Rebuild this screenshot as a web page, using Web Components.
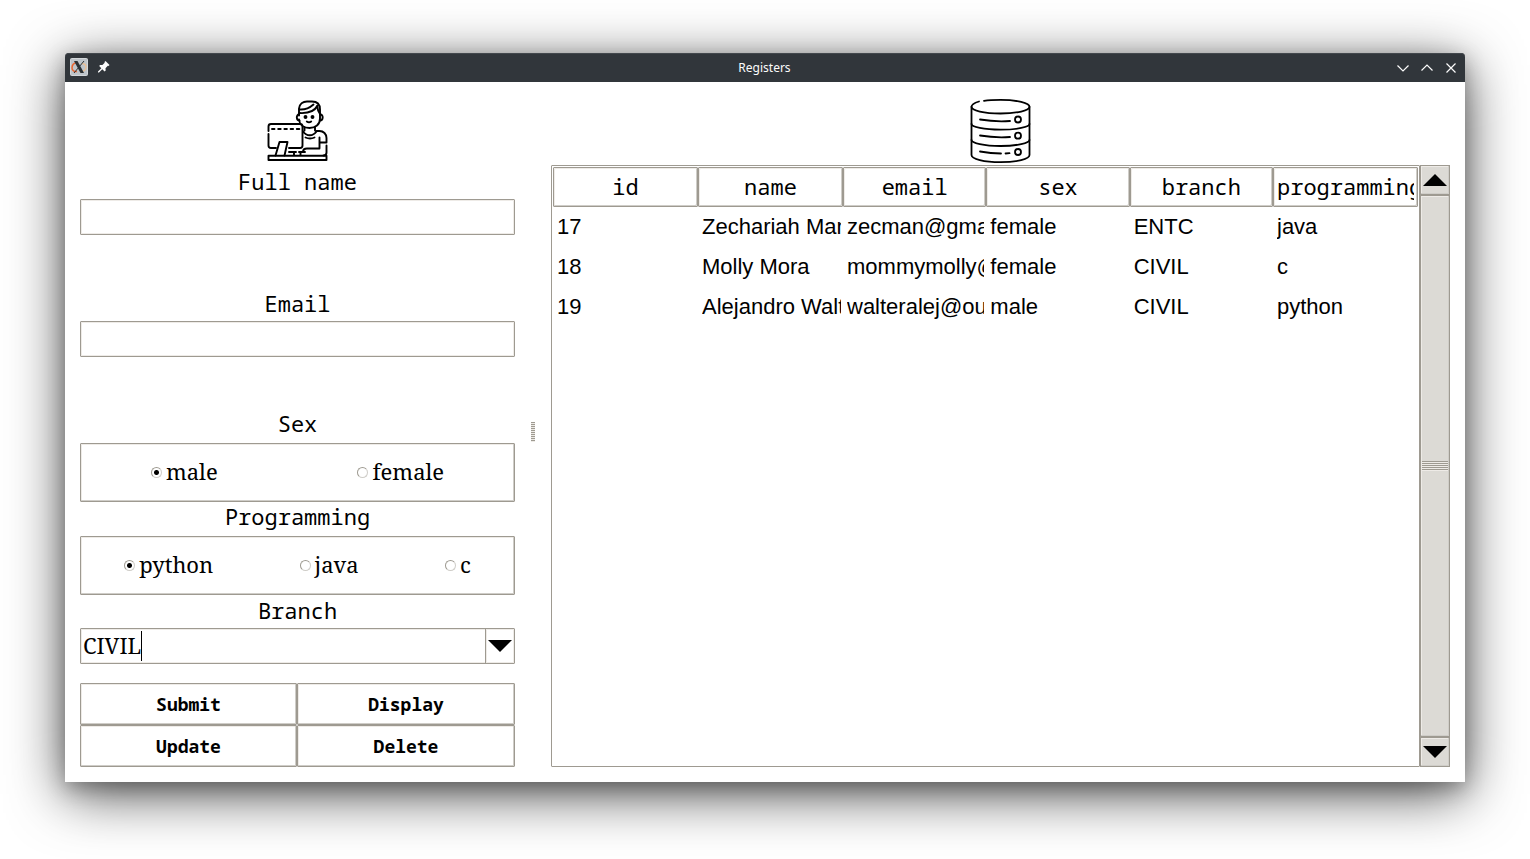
<!DOCTYPE html>
<html lang="en">
<head>
<meta charset="utf-8">
<title>Registers</title>
<style>
  html { background: #fff; }
  body {
    margin: 0;
    min-height: 100vh;
    box-sizing: border-box;
    padding: 53px 65px 77px;
    display: flex;
    color: #000;
    font: 22px/30px "Liberation Sans", sans-serif;
    --edge: #9e9a91;
    --light: #eeebe7;
    --dark: #cfcdc8;
    --face: #dcdad5;
    --mono: "Noto Sans Mono", "DejaVu Sans Mono", monospace;
    --serif: "Noto Serif", "DejaVu Serif Condensed", "DejaVu Serif", serif;
  }
</style>
</head>
<body>
<app-window>
  <title-bar slot="bar" heading="Registers"></title-bar>
  <register-form slot="left"></register-form>
  <register-list slot="right"></register-list>
</app-window>

<script>
const define = (name, html, setup) => {
  const template = document.createElement('template');
  template.innerHTML = html;
  customElements.define(name, class extends HTMLElement {
    constructor() {
      super();
      this.attachShadow({ mode: 'open' });
    }
    connectedCallback() {
      if (this.shadowRoot.childNodes.length) return;
      this.shadowRoot.append(template.content.cloneNode(true));
      if (setup) setup(this, this.shadowRoot);
    }
  });
};

define('app-window', `
  <style>
    :host { display: flex; flex-direction: column; flex: 1; min-width: 0; background: #fff;
      border-radius: 4px 4px 0 0;
      box-shadow: 0 12px 56px rgba(0,0,0,.7), 0 6px 20px rgba(0,0,0,.25); }
    main { flex: 1; display: grid; grid-template-columns: minmax(0, 435fr) 36px minmax(0, 899fr); padding: 15px; }
    .sash { display: flex; align-items: center; justify-content: center; }
    .grip { width: 4px; height: 20px; background: repeating-linear-gradient(var(--edge) 0 1px, var(--light) 1px 2px); }
  </style>
  <slot name="bar"></slot>
  <main>
    <slot name="left"></slot>
    <div class="sash"><div class="grip"></div></div>
    <slot name="right"></slot>
  </main>`);

define('title-bar', `
  <style>
    :host { display: grid; grid-template-columns: 1fr auto 1fr; align-items: center; height: 29px;
      padding: 0 6px 0 5px; box-sizing: border-box; background: #31363b; color: #fcfcfc;
      border-radius: 4px 4px 0 0; box-shadow: inset 0 1px #43484d; font: 12px/16px "Noto Sans", sans-serif; }
    .side { display: flex; align-items: center; gap: 8px; }
    .side.start { padding-bottom: 1px; }
    .side.end { justify-content: flex-end; }
    svg { display: block; }
    h1 { margin: 0; font: inherit; }
    button { padding: 0; border: 0; background: none; color: inherit; width: 16px; height: 16px; }
  </style>
  <div class="side start">
    <svg width="18" height="18" viewBox="0 0 18 18">
      <rect x=".5" y=".5" width="17" height="17" rx="1" fill="#bfc5ca" stroke="#d3d7da"/>
      <path d="M7 4.500C3.500 5 2 7.500 2 10c0 2.500 2.500 4 5 3.500" fill="none" stroke="#e9652f" stroke-width="1.500"/>
      <path d="M10 14c4-.5 6-2.500 6-5 0-2-1.500-3.200-4-3.500" fill="none" stroke="#eabf94" stroke-width="1.300"/>
      <path d="M4 3h3.500l6.500 12h-3.500z" fill="#2b3135"/>
      <path d="M14 3 4 15" stroke="#2b3135" stroke-width="1"/>
    </svg>
    <button aria-label="Keep above">
      <svg width="16" height="16" viewBox="0 0 16 16" fill="#fcfcfc"><path d="M9.500 2 13.500 6 12.500 7 11.800 6.800 9.500 9.200 9.700 11.500 8.600 12.400 6.300 10.200 3 13.500 2 13.500 2 12.500 5.300 9.200 3.200 7 4 5.900 6.400 6.100 8.700 3.800 8.500 3z"/></svg>
    </button>
  </div>
  <h1></h1>
  <div class="side end">
    <button aria-label="Minimize"><svg width="16" height="16" fill="none" stroke="#fcfcfc" stroke-width="1.200"><path d="M2.500 5.500 8 11l5.500-5.500"/></svg></button>
    <button aria-label="Maximize"><svg width="16" height="16" fill="none" stroke="#fcfcfc" stroke-width="1.200"><path d="M2.500 10.500 8 5l5.500 5.500"/></svg></button>
    <button aria-label="Close"><svg width="16" height="16" fill="none" stroke="#fcfcfc" stroke-width="1.200"><path d="m3.500 3.500 9 9m0-9-9 9"/></svg></button>
  </div>`, (el, root) => {
  root.querySelector('h1').textContent = el.getAttribute('heading');
});

define('person-icon', `
  <style>:host { display: block; } svg { display: block; }</style>
  <svg width="62" height="62" viewBox="0 0 62 62" fill="none" stroke="#000" stroke-width="1.900" stroke-linejoin="round" stroke-linecap="round">
    <path d="M32 15.500V8.500C32.500 4 36 1.500 40 1.500h5c5 0 8 3 8 8v9c0 6-4.500 9.500-10.500 9.500S32.500 24.500 32 19.500"/>
    <path d="M32.500 13c8 .5 15-1.500 18-7.500M32.500 9.500C38 10 43 7.500 46.500 4.500M50 6c.5 3 1.500 6 3 8"/>
    <path d="M32 14.500c-3 0-3 6 .5 6M53.500 14.500c3 0 3 6-.5 6"/>
    <circle cx="38.500" cy="17" r="1" fill="#000"/><circle cx="45.500" cy="17" r="1" fill="#000"/>
    <path d="M39.800 21.500q2.200 1.600 4.400 0M37.500 27v3.500M48 27v3.500M36 31.500c3.500 5 10 5 13.500 0M38.500 37.500q4.500 2 9 0"/>
    <path d="M49.500 31h3c4 0 7 3 7 7v4.500H52.500M52.500 37.500v10.500M59.500 45.500v7c0 1.500-1 3-3 3M52.500 48.500H40c-3 0-4 1.500-4 3.500"/>
    <path d="M1.500 31v-4.500c0-1.500 1-2.500 2.500-2.500h29c1.500 0 2.500 1 2.500 2.500v19c0 1.500-1 2.500-2.500 2.500H22M1.500 34v11.500C1.500 47 2.500 48 4 48h5"/>
    <path d="M5 29h27.500" stroke-dasharray="2.500 3.700"/>
    <path d="M8.500 55.500 12.500 42h8l-3 13.500M22 52h7M32 52h6M27 52v3M33.500 52v3"/>
    <path d="M1.500 55.800h58v4.200h-58z"/>
  </svg>`);

define('database-icon', `
  <style>:host { display: block; } svg { display: block; }</style>
  <svg width="62" height="66" viewBox="0 0 62 66" fill="none" stroke="#000" stroke-width="1.800" stroke-linecap="round">
    <path d="M9 3.500C4 5 1.500 6.500 1.500 8.800C1.500 12.500 14 15.500 30.500 15.500S59.500 12.500 59.500 8.800 47 1.900 30.500 1.900Q20 1.900 14 2.900"/>
    <path d="M1.500 8.800v48.200C1.500 61 14 64.200 30.500 64.200S59.500 61 59.500 57v-48.200"/>
    <path d="M1.500 26C1.500 29 14 31.700 30.500 31.700S59.500 29 59.500 26M1.500 42C1.500 45 14 48 30.500 48S59.500 45 59.500 42"/>
    <path d="M10 21.500q15 2.500 30 1.500M10 37.500q15 2.500 30 1.500M10 53.500q11 2 21 2M35.500 55.500l4-.3"/>
    <circle cx="48" cy="21.500" r="3"/><circle cx="48" cy="37.700" r="3"/><circle cx="48" cy="54" r="3"/>
  </svg>`);

define('text-field', `
  <style>
    :host { display: flex; flex-direction: column; }
    label { padding-bottom: 3px; font: 22px/30px var(--mono); text-align: center; }
    input { box-sizing: border-box; width: 100%; height: 36px; margin: 0; padding: 0 3px; border: 1px solid var(--edge);
      border-radius: 1px; box-shadow: inset 0 0 0 1px var(--light); background: #fff; font: 22px/30px var(--serif); outline: 0; }
  </style>
  <label for="field"></label>
  <input id="field" type="text">`, (el, root) => {
  root.querySelector('label').textContent = el.getAttribute('label');
});

define('radio-frame', `
  <style>
    :host { display: block; }
    fieldset { margin: 0; padding: 0; border: 0; min-width: 0; }
    legend { display: block; width: 100%; padding: 0 0 6px; font: 22px/28px var(--mono); text-align: center; }
    .box { box-sizing: border-box; display: flex; justify-content: space-around; align-items: center; height: 59px;
      border: 1px solid var(--edge); border-radius: 1px; box-shadow: inset -1px -1px var(--dark), inset 1px 1px var(--light); }
    label { display: flex; align-items: center; gap: 4px; font: 22px/30px var(--serif); }
    span { padding-bottom: 3px; }
    input { appearance: none; box-sizing: border-box; flex: none; width: 11px; height: 11px; margin: 0; border-radius: 50%;
      border: 1px solid; border-color: var(--edge) var(--dark) var(--dark) var(--edge); background: #fff; }
    input:checked { background: radial-gradient(circle, #000 2px, #fff 3px); }
  </style>
  <fieldset><legend></legend><div class="box"></div></fieldset>`, (el, root) => {
  root.querySelector('legend').textContent = el.getAttribute('label');
  el.getAttribute('options').split(' ').forEach((text, i) => {
    const label = document.createElement('label');
    const input = document.createElement('input');
    const span = document.createElement('span');
    input.type = 'radio';
    input.name = 'choice';
    input.value = text;
    input.checked = i === 0;
    span.textContent = text;
    label.append(input, span);
    root.querySelector('.box').append(label);
  });
});

define('combo-box', `
  <style>
    :host { display: flex; flex-direction: column; }
    label { padding-bottom: 3px; font: 22px/30px var(--mono); text-align: center; }
    .box { display: grid; height: 36px; position: relative; }
    select { appearance: none; box-sizing: border-box; width: 100%; margin: 0; padding: 0 32px 2px 2px; border: 1px solid var(--edge);
      border-radius: 1px; box-shadow: inset 0 0 0 1px var(--light); background: #fff; color: #000; font: 22px/30px var(--serif); outline: 0; }
    .caret { position: absolute; left: 61px; top: 3px; width: 1px; height: 30px; background: #000; pointer-events: none; }
    .arrow { position: absolute; right: 1px; top: 1px; bottom: 1px; width: 29px; box-sizing: border-box; display: grid; place-items: center;
      border-left: 1px solid var(--edge); box-shadow: inset 0 0 0 1px var(--light); pointer-events: none; }
  </style>
  <label for="branch">Branch</label>
  <div class="box">
    <select id="branch"><option>CIVIL</option><option>ENTC</option></select>
    <span class="caret"></span>
    <span class="arrow"><svg width="24" height="12"><path d="M0 0h24L12 12z"/></svg></span>
  </div>`);

define('push-button', `
  <style>
    :host { display: grid; }
    button { height: 42px; margin: 0; padding: 0; border: 1px solid var(--edge); border-radius: 1px;
      box-shadow: inset -1px -1px var(--dark), inset 1px 1px var(--light); background: #fff; color: #000; font: bold 18px/30px var(--mono); }
  </style>
  <button type="button"><slot></slot></button>`);

define('register-form', `
  <style>
    :host { display: flex; flex-direction: column; min-width: 0; }
    person-icon { align-self: center; padding: 3px 0 4px; }
    text-field { margin-bottom: 53px; }
    text-field + radio-frame { margin-top: -1px; }
    .buttons { margin-top: auto; display: grid; grid-template-columns: 217fr 218fr; }
  </style>
  <person-icon></person-icon>
  <text-field label="Full name"></text-field>
  <text-field label="Email"></text-field>
  <radio-frame label="Sex" options="male female"></radio-frame>
  <radio-frame label="Programming" options="python java c"></radio-frame>
  <combo-box></combo-box>
  <div class="buttons">
    <push-button>Submit</push-button><push-button>Display</push-button>
    <push-button>Update</push-button><push-button>Delete</push-button>
  </div>`);

define('record-table', `
  <style>
    :host { display: block; min-width: 0; box-sizing: border-box; border: 1px solid var(--edge); border-radius: 1px; padding: 1px; }
    table { width: 100%; table-layout: fixed; border-collapse: separate; border-spacing: 0; }
    .wide { width: 145px; }
    th, td { height: 40px; padding: 0 2px 0 4px; box-sizing: border-box; }
    th { border: 1px solid var(--edge); border-radius: 1px; padding: 0 3px 2px; box-shadow: inset -1px -1px var(--dark), inset 1px 1px var(--light); font: 22px/30px var(--mono); }
    td { text-align: left; font: 22px/30px "Liberation Sans", sans-serif; }
    span { display: block; overflow: hidden; white-space: nowrap; }
  </style>
  <table>
    <colgroup><col class="wide"><col class="wide"><col><col><col><col class="wide"></colgroup>
    <thead><tr></tr></thead><tbody></tbody>
  </table>`, (el, root) => {
  const cell = (tag, text) => {
    const c = document.createElement(tag);
    const s = document.createElement('span');
    s.textContent = text;
    c.append(s);
    return c;
  };
  root.querySelector('thead tr').append(
    ...['id', 'name', 'email', 'sex', 'branch', 'programming'].map(t => cell('th', t)));
  [
    ['17', 'Zechariah Man', 'zecman@gma', 'female', 'ENTC', 'java'],
    ['18', 'Molly Mora', 'mommymolly@', 'female', 'CIVIL', 'c'],
    ['19', 'Alejandro Walt', 'walteralej@ou', 'male', 'CIVIL', 'python'],
  ].forEach(row => {
    const tr = document.createElement('tr');
    tr.append(...row.map(t => cell('td', t)));
    root.querySelector('tbody').append(tr);
  });
});

define('scroll-bar', `
  <style>
    :host { display: grid; grid-template-rows: 30px 1fr 30px; width: 30px; }
    button, .thumb { box-sizing: border-box; display: grid; place-items: center; margin: 0; padding: 0;
      border: 1px solid var(--edge); border-radius: 0; background: var(--face);
      box-shadow: inset -1px -1px var(--dark), inset 1px 1px var(--light); }
    .grip { width: 26px; height: 10px; background: repeating-linear-gradient(var(--edge) 0 1px, var(--light) 1px 2px); }
  </style>
  <button type="button" aria-label="Scroll up"><svg width="24" height="12"><path d="M0 12h24L12 0z"/></svg></button>
  <div class="thumb"><div class="grip"></div></div>
  <button type="button" aria-label="Scroll down"><svg width="24" height="12"><path d="M0 0h24L12 12z"/></svg></button>`);

define('register-list', `
  <style>
    :host { display: flex; flex-direction: column; min-width: 0; }
    database-icon { align-self: center; padding: 1px 0; }
    .view { flex: 1; display: grid; grid-template-columns: minmax(0, 1fr) auto; }
  </style>
  <database-icon></database-icon>
  <div class="view"><record-table></record-table><scroll-bar></scroll-bar></div>`);
</script>
</body>
</html>
